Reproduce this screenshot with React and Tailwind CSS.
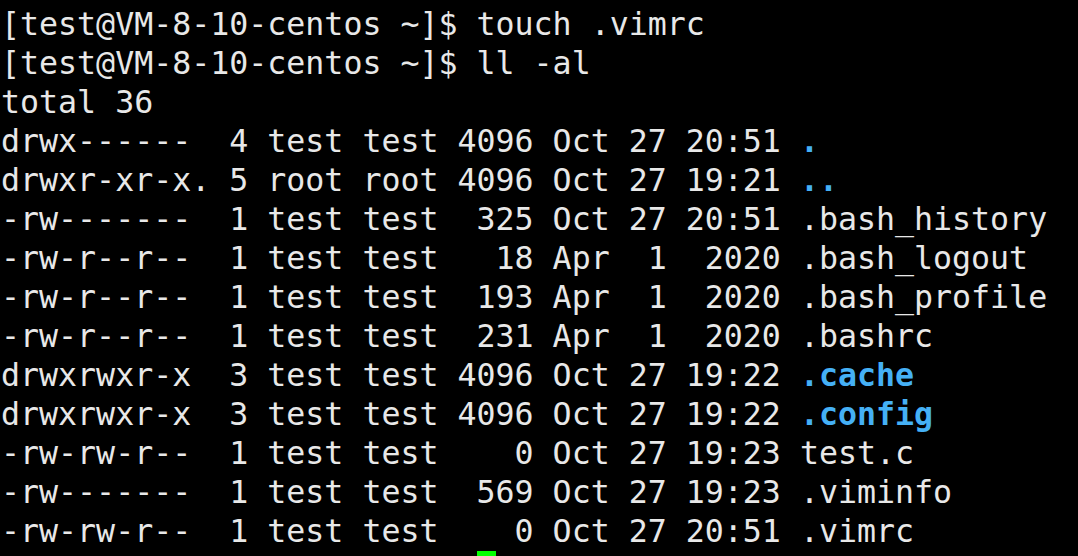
const lines = [
  { text: '[test@VM-8-10-centos ~]$ touch .vimrc' },
  { text: '[test@VM-8-10-centos ~]$ ll -al' },
  { text: 'total 36' },
  { text: 'drwx------  4 test test 4096 Oct 27 20:51 ', name: '.', dir: true },
  { text: 'drwxr-xr-x. 5 root root 4096 Oct 27 19:21 ', name: '..', dir: true },
  { text: '-rw-------  1 test test  325 Oct 27 20:51 ', name: '.bash_history' },
  { text: '-rw-r--r--  1 test test   18 Apr  1  2020 ', name: '.bash_logout' },
  { text: '-rw-r--r--  1 test test  193 Apr  1  2020 ', name: '.bash_profile' },
  { text: '-rw-r--r--  1 test test  231 Apr  1  2020 ', name: '.bashrc' },
  { text: 'drwxrwxr-x  3 test test 4096 Oct 27 19:22 ', name: '.cache', dir: true },
  { text: 'drwxrwxr-x  3 test test 4096 Oct 27 19:22 ', name: '.config', dir: true },
  { text: '-rw-rw-r--  1 test test    0 Oct 27 19:23 ', name: 'test.c' },
  { text: '-rw-------  1 test test  569 Oct 27 19:23 ', name: '.viminfo' },
  { text: '-rw-rw-r--  1 test test    0 Oct 27 20:51 ', name: '.vimrc' },
];

export default function App() {
  return (
    <div
      className="h-[556px] w-[1078px] overflow-hidden bg-black pl-[1px] pt-[5px] text-[31.6px] leading-[39px] text-[#e8e8e8]"
      style={{ fontFamily: '"DejaVu Sans Mono", monospace' }}
    >
      {lines.map((line, i) => (
        <div key={i} className="whitespace-pre">
          {line.text}
          {line.name && (
            <span className={line.dir ? 'font-bold text-[#45b0f5]' : ''}>{line.name}</span>
          )}
        </div>
      ))}
      <div className="whitespace-pre">
        {'                         '}
        <span className="inline-block h-[36px] w-[19px] bg-[#00ff00] align-top" />
      </div>
    </div>
  );
}
